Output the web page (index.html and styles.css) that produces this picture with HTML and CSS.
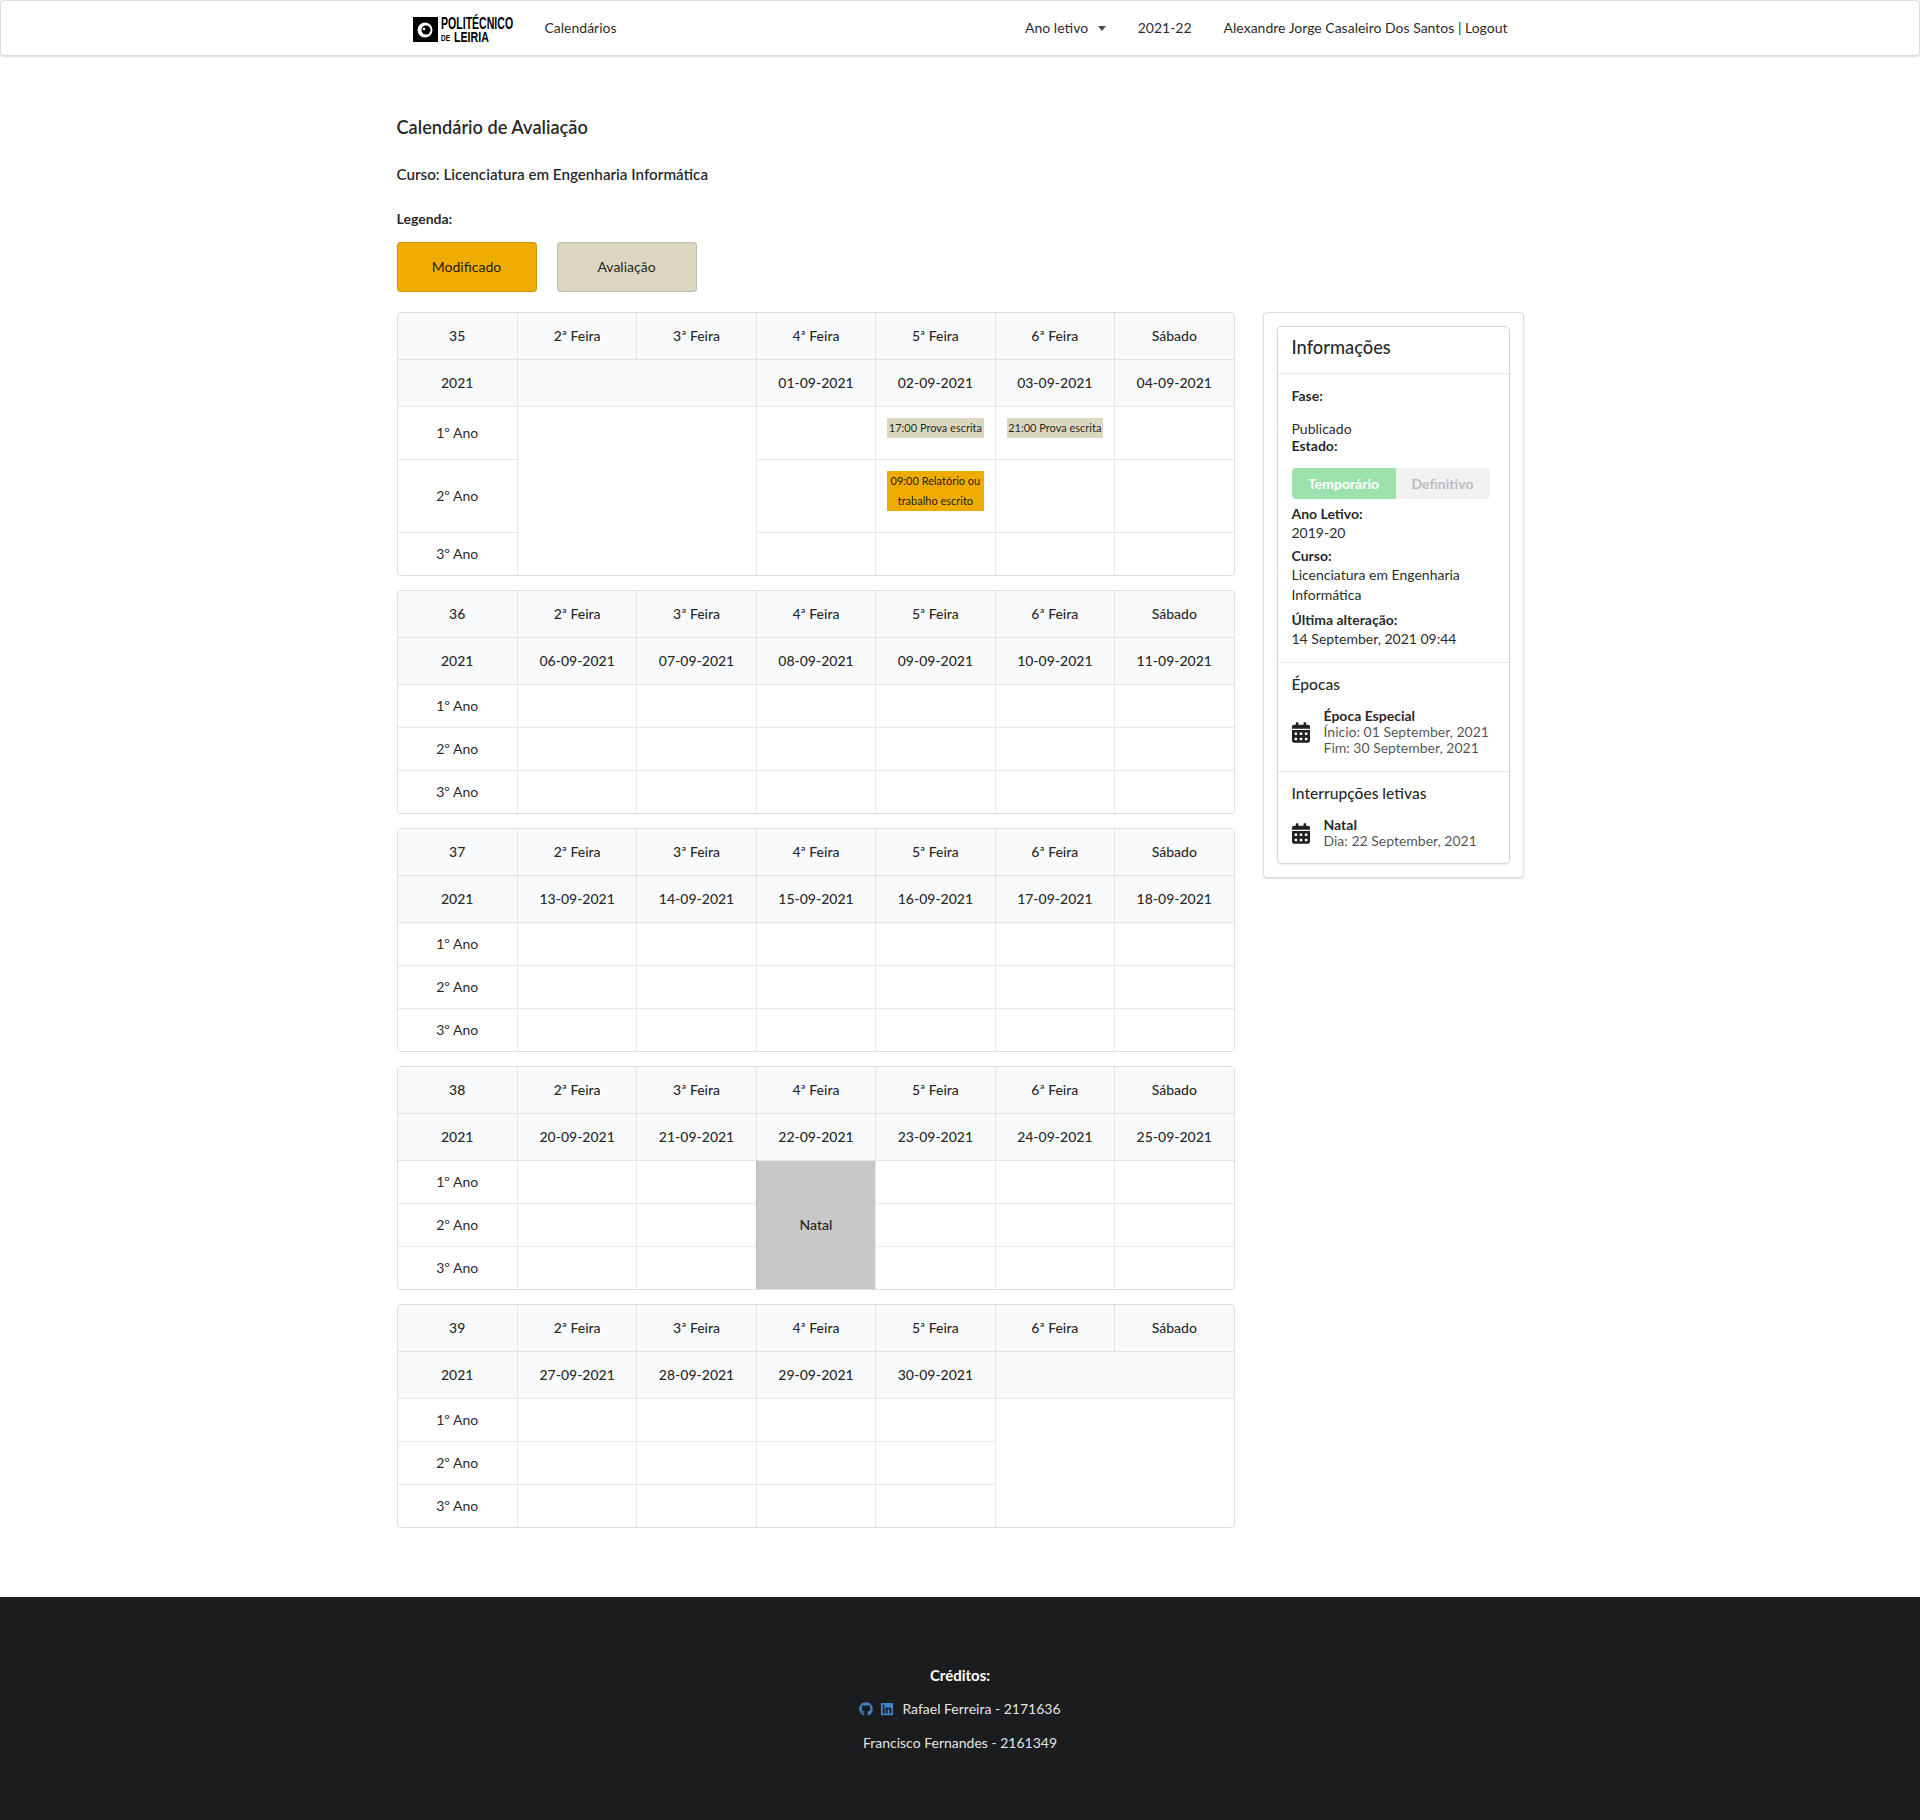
FILE: index.html
```html
<!DOCTYPE html>
<html lang="pt">
<head>
  <meta charset="UTF-8">
  <title>Calendário de Avaliação</title>
  <link rel="stylesheet" href="styles.css">
</head>
<body>

<nav class="topbar">
  <div class="topbar-inner">
    <a class="nav-item nav-logo">
      <svg width="100" height="28" viewBox="0 0 100 28">
        <rect x="0" y="2" width="25" height="25" fill="#000"/>
        <circle cx="12" cy="15" r="7.5" fill="#fff"/>
        <circle cx="13" cy="15" r="4.5" fill="#000"/>
        <circle cx="11" cy="14" r="1.3" fill="#fff"/>
        <text class="logo-big" transform="translate(28 13.5) scale(.66 1)">POLITÉCNICO</text>
        <text class="logo-small" transform="translate(28 26) scale(.72 1)">DE</text>
        <text class="logo-mid" transform="translate(41 26.5) scale(.76 1)">LEIRIA</text>
      </svg>
    </a>
    <a class="nav-item">Calendários</a>
    <div class="nav-right">
      <a class="nav-item">Ano letivo <span class="caret"></span></a>
      <a class="nav-item">2021-22</a>
      <a class="nav-item">Alexandre Jorge Casaleiro Dos Santos | Logout</a>
    </div>
  </div>
</nav>

<main class="page">
  <h3 class="page-title">Calendário de Avaliação</h3>
  <h4 class="course-title">Curso: Licenciatura em Engenharia Informática</h4>
  <div class="legend-label">Legenda:</div>
  <div class="legend">
    <div class="legend-box modified">Modificado</div>
    <div class="legend-box exam">Avaliação</div>
  </div>

  <div class="columns">
    <div class="calendars">

      <table class="week">
        <thead>
          <tr><th>35</th><th>2ª Feira</th><th>3ª Feira</th><th>4ª Feira</th><th>5ª Feira</th><th>6ª Feira</th><th>Sábado</th></tr>
          <tr><th>2021</th><th colspan="2"></th><th>01-09-2021</th><th>02-09-2021</th><th>03-09-2021</th><th>04-09-2021</th></tr>
        </thead>
        <tbody>
          <tr>
            <td>1º Ano</td><td colspan="2" rowspan="3"></td><td></td>
            <td><div class="pill exam">17:00 Prova escrita</div></td>
            <td><div class="pill exam">21:00 Prova escrita</div></td>
            <td></td>
          </tr>
          <tr>
            <td>2º Ano</td><td></td>
            <td><div class="pill modified">09:00 Relatório ou trabalho escrito</div></td>
            <td></td><td></td>
          </tr>
          <tr><td>3º Ano</td><td></td><td></td><td></td><td></td></tr>
        </tbody>
      </table>

      <table class="week">
        <thead>
          <tr><th>36</th><th>2ª Feira</th><th>3ª Feira</th><th>4ª Feira</th><th>5ª Feira</th><th>6ª Feira</th><th>Sábado</th></tr>
          <tr><th>2021</th><th>06-09-2021</th><th>07-09-2021</th><th>08-09-2021</th><th>09-09-2021</th><th>10-09-2021</th><th>11-09-2021</th></tr>
        </thead>
        <tbody>
          <tr><td>1º Ano</td><td></td><td></td><td></td><td></td><td></td><td></td></tr>
          <tr><td>2º Ano</td><td></td><td></td><td></td><td></td><td></td><td></td></tr>
          <tr><td>3º Ano</td><td></td><td></td><td></td><td></td><td></td><td></td></tr>
        </tbody>
      </table>

      <table class="week">
        <thead>
          <tr><th>37</th><th>2ª Feira</th><th>3ª Feira</th><th>4ª Feira</th><th>5ª Feira</th><th>6ª Feira</th><th>Sábado</th></tr>
          <tr><th>2021</th><th>13-09-2021</th><th>14-09-2021</th><th>15-09-2021</th><th>16-09-2021</th><th>17-09-2021</th><th>18-09-2021</th></tr>
        </thead>
        <tbody>
          <tr><td>1º Ano</td><td></td><td></td><td></td><td></td><td></td><td></td></tr>
          <tr><td>2º Ano</td><td></td><td></td><td></td><td></td><td></td><td></td></tr>
          <tr><td>3º Ano</td><td></td><td></td><td></td><td></td><td></td><td></td></tr>
        </tbody>
      </table>

      <table class="week">
        <thead>
          <tr><th>38</th><th>2ª Feira</th><th>3ª Feira</th><th>4ª Feira</th><th>5ª Feira</th><th>6ª Feira</th><th>Sábado</th></tr>
          <tr><th>2021</th><th>20-09-2021</th><th>21-09-2021</th><th>22-09-2021</th><th>23-09-2021</th><th>24-09-2021</th><th>25-09-2021</th></tr>
        </thead>
        <tbody>
          <tr><td>1º Ano</td><td></td><td></td><td class="holiday" rowspan="3">Natal</td><td></td><td></td><td></td></tr>
          <tr><td>2º Ano</td><td></td><td></td><td></td><td></td><td></td></tr>
          <tr><td>3º Ano</td><td></td><td></td><td></td><td></td><td></td></tr>
        </tbody>
      </table>

      <table class="week">
        <thead>
          <tr><th>39</th><th>2ª Feira</th><th>3ª Feira</th><th>4ª Feira</th><th>5ª Feira</th><th>6ª Feira</th><th>Sábado</th></tr>
          <tr><th>2021</th><th>27-09-2021</th><th>28-09-2021</th><th>29-09-2021</th><th>30-09-2021</th><th colspan="2"></th></tr>
        </thead>
        <tbody>
          <tr><td>1º Ano</td><td></td><td></td><td></td><td></td><td colspan="2" rowspan="3"></td></tr>
          <tr><td>2º Ano</td><td></td><td></td><td></td><td></td></tr>
          <tr><td>3º Ano</td><td></td><td></td><td></td><td></td></tr>
        </tbody>
      </table>

    </div>

    <aside class="side">
      <div class="info-card">
        <div class="info-header">Informações</div>

        <div class="info-block">
          <div class="info-phase"><b>Fase:</b></div>
          <div class="info-tight">Publicado</div>
          <div class="info-tight"><b>Estado:</b></div>
          <div class="state-buttons">
            <div class="state-btn temp">Temporário</div>
            <div class="state-btn final">Definitivo</div>
          </div>
          <div class="info-group">
            <div class="info-label">Ano Letivo:</div>
            <div>2019-20</div>
          </div>
          <div class="info-group">
            <div class="info-label">Curso:</div>
            <div>Licenciatura em Engenharia Informática</div>
          </div>
          <div class="info-group">
            <div class="info-label">Última alteração:</div>
            <div>14 September, 2021 09:44</div>
          </div>
        </div>

        <div class="info-section">
          <div class="section-title">Épocas</div>
          <div class="list-item">
            <svg class="cal-icon" viewBox="0 0 448 512"><path d="M0 464c0 26.5 21.5 48 48 48h352c26.5 0 48-21.5 48-48V192H0v272zm320-196c0-6.6 5.4-12 12-12h40c6.6 0 12 5.4 12 12v40c0 6.6-5.4 12-12 12h-40c-6.6 0-12-5.4-12-12v-40zm0 128c0-6.6 5.4-12 12-12h40c6.6 0 12 5.4 12 12v40c0 6.6-5.4 12-12 12h-40c-6.6 0-12-5.4-12-12v-40zM192 268c0-6.6 5.4-12 12-12h40c6.6 0 12 5.4 12 12v40c0 6.6-5.4 12-12 12h-40c-6.6 0-12-5.4-12-12v-40zm0 128c0-6.6 5.4-12 12-12h40c6.6 0 12 5.4 12 12v40c0 6.6-5.4 12-12 12h-40c-6.6 0-12-5.4-12-12v-40zM64 268c0-6.6 5.4-12 12-12h40c6.6 0 12 5.4 12 12v40c0 6.6-5.4 12-12 12H76c-6.6 0-12-5.4-12-12v-40zm0 128c0-6.6 5.4-12 12-12h40c6.6 0 12 5.4 12 12v40c0 6.6-5.4 12-12 12H76c-6.6 0-12-5.4-12-12v-40zM400 64h-48V16c0-8.8-7.2-16-16-16h-32c-8.8 0-16 7.2-16 16v48H160V16c0-8.8-7.2-16-16-16h-32c-8.8 0-16 7.2-16 16v48H48C21.5 64 0 85.5 0 112v48h448v-48c0-26.5-21.5-48-48-48z"/></svg>
            <div class="list-text">
              <div class="list-name">Época Especial</div>
              <div class="list-desc">Ínicio: 01 September, 2021</div>
              <div class="list-desc">Fim: 30 September, 2021</div>
            </div>
          </div>
        </div>

        <div class="info-section">
          <div class="section-title">Interrupções letivas</div>
          <div class="list-item">
            <svg class="cal-icon" viewBox="0 0 448 512"><path d="M0 464c0 26.5 21.5 48 48 48h352c26.5 0 48-21.5 48-48V192H0v272zm320-196c0-6.6 5.4-12 12-12h40c6.6 0 12 5.4 12 12v40c0 6.6-5.4 12-12 12h-40c-6.6 0-12-5.4-12-12v-40zm0 128c0-6.6 5.4-12 12-12h40c6.6 0 12 5.4 12 12v40c0 6.6-5.4 12-12 12h-40c-6.6 0-12-5.4-12-12v-40zM192 268c0-6.6 5.4-12 12-12h40c6.6 0 12 5.4 12 12v40c0 6.6-5.4 12-12 12h-40c-6.6 0-12-5.4-12-12v-40zm0 128c0-6.6 5.4-12 12-12h40c6.6 0 12 5.4 12 12v40c0 6.6-5.4 12-12 12h-40c-6.6 0-12-5.4-12-12v-40zM64 268c0-6.6 5.4-12 12-12h40c6.6 0 12 5.4 12 12v40c0 6.6-5.4 12-12 12H76c-6.6 0-12-5.4-12-12v-40zm0 128c0-6.6 5.4-12 12-12h40c6.6 0 12 5.4 12 12v40c0 6.6-5.4 12-12 12H76c-6.6 0-12-5.4-12-12v-40zM400 64h-48V16c0-8.8-7.2-16-16-16h-32c-8.8 0-16 7.2-16 16v48H160V16c0-8.8-7.2-16-16-16h-32c-8.8 0-16 7.2-16 16v48H48C21.5 64 0 85.5 0 112v48h448v-48c0-26.5-21.5-48-48-48z"/></svg>
            <div class="list-text">
              <div class="list-name">Natal</div>
              <div class="list-desc">Dia: 22 September, 2021</div>
            </div>
          </div>
        </div>
      </div>
    </aside>
  </div>
</main>

<footer class="footer">
  <div class="credits-title">Créditos:</div>
  <div class="credits-line">
    <svg class="foot-icon" viewBox="0 0 496 512"><path d="M165.9 397.4c0 2-2.3 3.6-5.2 3.6-3.3 0-5.6-1.6-5.6-3.6 0-2 2.3-3.6 5.2-3.6 3-.3 5.6 1.3 5.6 3.6zm-31.1-4.5c-.7 2 1.3 4.3 4.3 4.9 2.6 1 5.6 0 6.2-2s-1.3-4.3-4.3-5.2c-2.6-.7-5.5.3-6.2 2.3zm44.2-1.7c-2.9.7-4.9 2.6-4.6 4.9.3 2 2.9 3.3 5.9 2.6 2.9-.7 4.9-2.6 4.6-4.6-.3-1.9-3-3.2-5.9-2.9zM244.8 8C106.1 8 0 113.3 0 252c0 110.9 69.8 205.8 169.5 239.2 12.8 2.3 17.3-5.6 17.3-12.1 0-6.2-.3-40.4-.3-61.4 0 0-70 15-84.7-29.8 0 0-11.4-29.1-27.8-36.6 0 0-22.9-15.7 1.6-15.4 0 0 24.9 2 38.6 25.8 21.9 38.6 58.6 27.5 72.9 20.9 2.3-16 8.8-27.1 16-33.7-55.9-6.2-112.3-14.3-112.3-110.5 0-27.5 7.6-41.3 23.6-58.9-2.6-6.5-11.1-33.3 2.6-67.9 20.9-6.5 69 27 69 27 20-5.6 41.5-8.5 62.8-8.5s42.8 2.9 62.8 8.5c0 0 48.1-33.6 69-27 13.7 34.7 5.2 61.4 2.6 67.9 16 17.7 25.8 31.5 25.8 58.9 0 96.5-58.9 104.2-114.8 110.5 9.2 7.9 17 22.9 17 46.4 0 33.7-.3 75.4-.3 83.6 0 6.5 4.6 14.4 17.3 12.1C428.2 457.8 496 362.9 496 252 496 113.3 383.5 8 244.8 8z"/></svg>
    <svg class="foot-icon" viewBox="0 0 448 512"><path d="M416 32H31.9C14.3 32 0 46.5 0 64.3v383.4C0 465.5 14.3 480 31.9 480H416c17.6 0 32-14.5 32-32.3V64.3c0-17.8-14.4-32.3-32-32.3zM135.4 416H69V202.2h66.5V416zm-33.2-243c-21.3 0-38.5-17.3-38.5-38.5S80.9 96 102.2 96c21.2 0 38.5 17.3 38.5 38.5 0 21.3-17.2 38.5-38.5 38.5zm282.1 243h-66.4V312c0-24.8-.5-56.7-34.5-56.7-34.6 0-39.9 27-39.9 54.9V416h-66.4V202.2h63.7v29.2h.9c8.9-16.8 30.6-34.5 62.9-34.5 67.2 0 79.7 44.3 79.7 101.9V416z"/></svg>
    <span class="credits-name">Rafael Ferreira - 2171636</span>
  </div>
  <div class="credits-line">Francisco Fernandes - 2161349</div>
</footer>

</body>
</html>
```

FILE: styles.css
```css
* {
  box-sizing: border-box;
}

body {
  margin: 0;
  background: #fff;
  color: rgba(0, 0, 0, 0.87);
  font-family: Lato, "Helvetica Neue", Arial, sans-serif;
  font-size: 14px;
  line-height: 20px;
}

/* top menu */
.topbar {
  height: 56px;
  background: #fff;
  border: 1px solid rgba(34, 36, 38, 0.15);
  border-radius: 4px;
  box-shadow: 0 1px 2px 0 rgba(34, 36, 38, 0.15);
}

.topbar-inner {
  width: 1127px;
  height: 100%;
  margin: 0 auto;
  display: flex;
  align-items: center;
}

.nav-item {
  padding: 0 16px;
  white-space: nowrap;
}

.nav-logo svg {
  display: block;
  margin-top: 2px;
  overflow: visible;
}

.logo-big,
.logo-mid,
.logo-small {
  font-family: "Liberation Sans", sans-serif;
  font-weight: 700;
  fill: #000;
}

.logo-big {
  font-size: 16px;
}

.logo-mid {
  font-size: 14px;
}

.logo-small {
  font-size: 9px;
}

.nav-right {
  margin-left: auto;
  display: flex;
  align-items: center;
}

.caret {
  display: inline-block;
  margin-left: 6px;
  vertical-align: 2px;
  border-left: 4px solid transparent;
  border-right: 4px solid transparent;
  border-top: 5px solid rgba(0, 0, 0, 0.7);
}

/* page */
.page {
  width: 1127px;
  margin: 0 auto;
  padding-top: 59px;
}

.page-title {
  margin: 0;
  font-size: 18.2px;
  line-height: 24px;
  font-weight: 600;
}

.course-title {
  margin: 25px 0 0;
  font-size: 15.2px;
  line-height: 20px;
  font-weight: 600;
}

.legend-label {
  margin-top: 25px;
  font-weight: 700;
}

.legend {
  display: flex;
  gap: 20px;
  margin-top: 13px;
}

.legend-box {
  width: 140px;
  height: 50px;
  display: flex;
  align-items: center;
  justify-content: center;
  border: 1px solid rgba(34, 36, 38, 0.15);
  border-radius: 4px;
}

.modified {
  background: #eeab00;
}

.exam {
  background: #dcd8c0;
}

.columns {
  display: flex;
  gap: 28px;
  align-items: flex-start;
  margin-top: 20px;
}

/* week tables */
.calendars {
  width: 838px;
}

.week {
  width: 838px;
  table-layout: fixed;
  border-collapse: separate;
  border-spacing: 0;
  margin-bottom: 14px;
  border: 1px solid rgba(34, 36, 38, 0.15);
  border-radius: 4px;
  text-align: center;
}

.week th {
  padding: 13px 11px;
  height: 47px;
  background: #f9fafb;
  font-weight: 500;
  border-bottom: 1px solid rgba(34, 36, 38, 0.1);
}

.week th + th,
.week td + td {
  border-left: 1px solid rgba(34, 36, 38, 0.1);
}

.week td {
  padding: 11px;
  border-top: 1px solid rgba(34, 36, 38, 0.1);
  vertical-align: middle;
}

.week tbody tr:first-child td {
  border-top: none;
}

.week thead tr:first-child th:first-child {
  border-top-left-radius: 3px;
}

.week thead tr:first-child th:last-child {
  border-top-right-radius: 3px;
}

.week td.holiday {
  background: #c8c8c8;
  font-weight: 500;
}

.pill {
  margin-bottom: 10px;
  font-size: 11px;
  line-height: 20px;
}

/* side panel */
.side {
  width: 261px;
  padding: 14px;
  border: 1px solid rgba(34, 36, 38, 0.15);
  border-radius: 4px;
  box-shadow: 0 1px 2px 0 rgba(34, 36, 38, 0.15);
}

.info-card {
  border-radius: 4px;
  background: #fff;
  box-shadow: 0 1px 3px 0 #d4d4d5, 0 0 0 1px #d4d4d5;
}

.info-header {
  padding: 8px 14px 13px;
  font-size: 18.3px;
  line-height: 25px;
  font-weight: 500;
  border-bottom: 1px solid rgba(34, 36, 38, 0.1);
}

.info-block {
  padding: 12px 14px 13px;
}

.info-phase {
  margin-bottom: 14px;
}

.info-tight {
  line-height: 17px;
}

b,
.info-label {
  font-weight: 700;
}

.state-buttons {
  display: flex;
  width: 198px;
  height: 31px;
  margin-top: 14px;
  margin-bottom: 6px;
  font-weight: 700;
  text-align: center;
  line-height: 31px;
}

.state-btn.temp {
  width: 104px;
  background: #9de1ad;
  color: #fff;
  border-radius: 4px 0 0 4px;
}

.state-btn.final {
  width: 94px;
  background: #f1f1f1;
  color: #bdbdbd;
  border-radius: 0 4px 4px 0;
}

.info-label {
  line-height: 18px;
}

.info-group + .info-group {
  margin-top: 4px;
}

.info-group:last-child {
  margin-top: 6px;
}

.info-section {
  padding: 11px 14px 15px;
  border-top: 1px solid rgba(34, 36, 38, 0.1);
}

.info-section:last-child {
  padding-bottom: 14px;
}

.section-title {
  margin-bottom: 14px;
  font-size: 15.6px;
  font-weight: 500;
}

.list-item {
  display: flex;
  align-items: center;
  gap: 14px;
}

.cal-icon {
  width: 18px;
  height: 21px;
  flex: none;
  fill: rgba(0, 0, 0, 0.87);
}

.list-text {
  line-height: 16px;
}

.list-name {
  font-weight: 700;
}

.list-desc {
  color: rgba(0, 0, 0, 0.7);
}

/* footer */
.footer {
  margin-top: 55px;
  height: 223px;
  padding-top: 68px;
  background: #1b1c1d;
  color: rgba(255, 255, 255, 0.9);
  text-align: center;
}

.credits-title {
  font-size: 15px;
  font-weight: 700;
  color: #fff;
}

.credits-line {
  margin-top: 14px;
  display: flex;
  align-items: center;
  justify-content: center;
}

.foot-icon {
  height: 14px;
  width: 14px;
  margin-right: 7px;
  fill: #4183c4;
}

.credits-name {
  margin-left: 1px;
}
```
